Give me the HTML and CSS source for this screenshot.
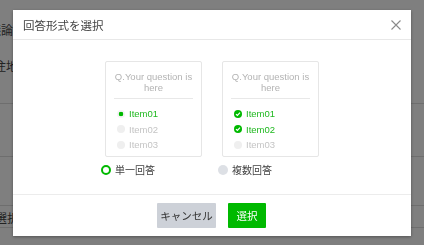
FILE: index.html
```html
<!DOCTYPE html>
<html lang="ja">

<head>
    <meta charset="utf-8">
    <meta name="viewport" content="width=device-width, initial-scale=1.0">
    <title>回答形式を選択</title>
    <link rel="stylesheet" href="styles.css">
</head>

<body>
    <!-- page behind the dialog -->
    <div class="page">
        <div class="page_block">
            <p class="page_label first">議論</p>
            <p class="page_label second">居住地</p>
        </div>
        <div class="page_block b2"></div>
        <div class="page_block b3"></div>
        <div class="page_block b4">
            <p class="page_label third">選択</p>
        </div>
    </div>

    <div class="overlay">
        <div class="modal">
            <div class="modal_head">
                <h2>回答形式を選択</h2>
                <button class="close" aria-label="閉じる">
                    <svg width="10" height="10" viewBox="0 0 10 10">
                        <path d="M0.5 0.5 L9.5 9.5 M9.5 0.5 L0.5 9.5" stroke="#8a8a8a" stroke-width="1.1" fill="none" />
                    </svg>
                </button>
            </div>

            <div class="modal_body">
                <div class="option">
                    <div class="preview">
                        <p class="question">Q.Your question is<br>here</p>
                        <ul class="items">
                            <li class="on"><span class="mark radio_on"></span>Item01</li>
                            <li><span class="mark"></span>Item02</li>
                            <li><span class="mark"></span>Item03</li>
                        </ul>
                    </div>
                    <label class="choice"><span class="choice_dot valgt"></span>単一回答</label>
                </div>

                <div class="option">
                    <div class="preview">
                        <p class="question">Q.Your question is<br>here</p>
                        <ul class="items">
                            <li class="on"><span class="mark check_on"><svg width="8" height="8" viewBox="0 0 8 8"><path d="M2 4.1 L3.4 5.5 L6 2.7" stroke="#fff" stroke-width="1.2" fill="none" /></svg></span>Item01</li>
                            <li class="on"><span class="mark check_on"><svg width="8" height="8" viewBox="0 0 8 8"><path d="M2 4.1 L3.4 5.5 L6 2.7" stroke="#fff" stroke-width="1.2" fill="none" /></svg></span>Item02</li>
                            <li><span class="mark"></span>Item03</li>
                        </ul>
                    </div>
                    <label class="choice"><span class="choice_dot"></span>複数回答</label>
                </div>
            </div>

            <div class="modal_foot">
                <button class="btn cancel">キャンセル</button>
                <button class="btn ok">選択</button>
            </div>
        </div>
    </div>
</body>

</html>
```

FILE: styles.css
```css
/* basis */

body {
    margin: 0;
    font-family: "Liberation Sans", "Noto Sans CJK JP", sans-serif;
    background-color: #fff;
    color: #333;
}

p,
h2,
ul {
    margin: 0;
    padding: 0;
}

/* ------- siden bagved ------- */

.page {
    height: 245px;
    overflow: hidden;
}

.page_block {
    border-bottom: 1px solid #ddd;
    height: 104px;
    padding-top: 22px;
    box-sizing: border-box;
}

.page_block.b2 {
    height: 53px;
    padding: 0;
}

.page_block.b3 {
    height: 49px;
    padding: 0;
}

.page_block.b4 {
    height: 22px;
    padding-top: 4px;
}

.page_label {
    font-family: "Noto Sans CJK JP", sans-serif;
    font-size: 12px;
    line-height: 16px;
    color: #444;
}

.page_label.first {
    margin-left: -11px;
    margin-bottom: 20px;
}

.page_label.second {
    margin-left: -18px;
}

.page_label.third {
    margin-left: -5px;
}

/* ------- dialog ------- */

.overlay {
    position: fixed;
    top: 0;
    left: 0;
    right: 0;
    bottom: 0;
    background-color: rgba(0, 0, 0, 0.5);
    display: flex;
    justify-content: center;
    align-items: flex-start;
    padding-top: 10px;
}

.modal {
    width: 398px;
    height: 226px;
    background-color: #fff;
    box-shadow: 0 1px 3px rgba(0, 0, 0, 0.35);
    display: flex;
    flex-direction: column;
}

.modal_head {
    height: 29px;
    border-bottom: 1px solid #e8e8e8;
    display: flex;
    align-items: center;
    justify-content: space-between;
    padding: 0 10px 0 10px;
}

.modal_head h2 {
    font-family: "Noto Sans CJK JP", sans-serif;
    font-size: 11.5px;
    font-weight: normal;
    color: #444;
}

.close {
    border: none;
    background: none;
    padding: 0;
    width: 10px;
    height: 10px;
    display: flex;
    cursor: pointer;
}

.modal_body {
    flex: 1;
    display: flex;
    justify-content: center;
    gap: 20px;
    padding-top: 21px;
}

.option {
    width: 97px;
}

.preview {
    height: 96px;
    box-sizing: border-box;
    border: 1px solid #e6e6e6;
    border-radius: 2px;
    padding: 9px 8px 0;
}

.question {
    font-size: 9.5px;
    line-height: 11px;
    color: #b3b3b3;
    text-align: center;
    padding-bottom: 5px;
    border-bottom: 1px solid #e8e8e8;
}

.items {
    list-style-type: none;
    padding: 7px 0 0 3px;
}

.items li {
    display: flex;
    align-items: center;
    gap: 4px;
    height: 15.5px;
    font-size: 9.5px;
    color: #c4c4c4;
}

.items li.on {
    color: #1fb81f;
}

.mark {
    width: 8px;
    height: 8px;
    border-radius: 50%;
    background-color: #efefef;
    display: flex;
}

.radio_on {
    background: radial-gradient(circle, #00b900 0, #00b900 2px, #f4f4f4 2.6px);
}

.check_on {
    background-color: #00b900;
}

.choice {
    display: flex;
    align-items: center;
    gap: 4px;
    margin: 6px 0 0 -4px;
    font-family: "Noto Sans CJK JP", sans-serif;
    font-size: 10px;
    line-height: 14px;
    color: #444;
}

.choice_dot {
    width: 10px;
    height: 10px;
    box-sizing: border-box;
    border-radius: 50%;
    background-color: #dde0e5;
}

.choice_dot.valgt {
    background-color: #fff;
    border: 2.5px solid #00b900;
}

.modal_foot {
    height: 42px;
    border-top: 1px solid #ececec;
    box-sizing: border-box;
    display: flex;
    justify-content: center;
    gap: 12px;
    padding-top: 8px;
}

.btn {
    height: 25px;
    border: none;
    border-radius: 1px;
    font-family: "Noto Sans CJK JP", sans-serif;
    font-size: 10.5px;
    cursor: pointer;
}

.cancel {
    width: 59px;
    padding: 0;
    background-color: #cdd1d8;
    color: #333;
    margin-left: -1px;
}

.ok {
    width: 38px;
    padding: 0;
    background-color: #00b900;
    color: #fff;
}
```
